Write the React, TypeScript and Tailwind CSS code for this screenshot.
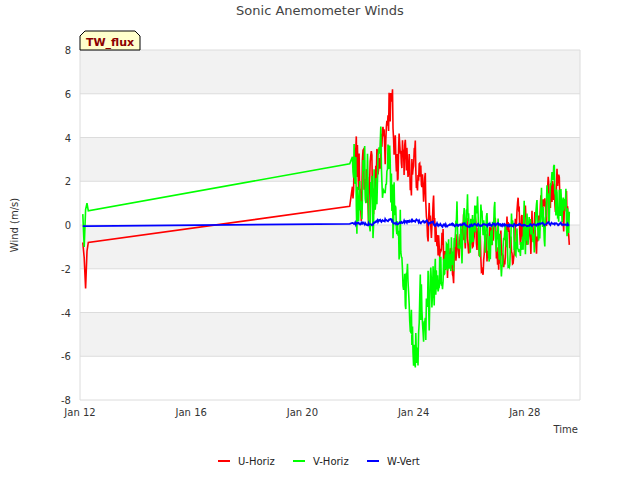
import React from "react";

const X0 = 80, X1 = 580, Y0 = 50, Y1 = 400;
const xd = (d: number) => 80 + (d - 12) * 27.8;
const yv = (v: number) => Y0 + ((8 - v) / 16) * (Y1 - Y0);

function rng(seed: number) {
  let s = seed;
  return () => {
    s = (s * 1103515245 + 12345) % 2147483648;
    return s / 2147483648;
  };
}
function interp(pts: number[][], t: number) {
  for (let i = 0; i < pts.length - 1; i++) {
    if (t >= pts[i][0] && t <= pts[i + 1][0]) {
      const f = (t - pts[i][0]) / (pts[i + 1][0] - pts[i][0]);
      return pts[i][1] + f * (pts[i + 1][1] - pts[i][1]);
    }
  }
  return pts[pts.length - 1][1];
}
function series(start: number[][], mean: number[][], amp: number[][], seed: number, clampMin: number, clampMax: number) {
  const r = rng(seed);
  const out: number[][] = [...start];
  let prev = 0;
  for (let t = 21.8; t <= 29.6; t += 0.02) {
    const n = (r() - 0.5) * 2;
    prev = prev * 0.55 + n;
    let v = interp(mean, t) + prev * interp(amp, t);
    v = Math.max(clampMin, Math.min(clampMax, v));
    out.push([t, v]);
  }
  return out;
}
const U = series(
  [[12.1, -0.8], [12.15, -1.5], [12.2, -2.9], [12.25, -1.2], [12.3, -0.8], [21.7, 0.85]],
  [[21.8, 1.5], [22, 2.5], [22.5, 1.5], [23, 4.5], [23.15, 6.5], [23.3, 3.5], [23.6, 3.5], [24, 2.5], [24.3, 1.3], [24.6, 0.5], [25, -1.2], [25.3, -2], [25.6, -0.5], [26, 0.3], [26.5, -1.3], [27, -1.2], [27.5, -0.5], [28, 0], [28.5, -0.3], [29, 1.3], [29.2, 2.3], [29.6, -0.5]],
  [[21.8, 1.3], [23, 1.5], [24, 1.1], [25, 1], [26, 0.9], [29.6, 0.9]],
  7, -2.9, 7.1
);
const V = series(
  [[12.1, 0.5], [12.15, -1.0], [12.2, 0.7], [12.25, 1.0], [12.3, 0.65], [21.7, 2.8]],
  [[21.8, 2.5], [22, 1], [22.3, 2], [22.6, 1.5], [23, 3.5], [23.2, 1], [23.5, -1], [23.8, -3], [24, -5], [24.3, -3.5], [24.7, -3], [25, -2.5], [25.3, -1.5], [25.6, -0.5], [26, 0], [26.5, -0.3], [27, -0.5], [28, 0], [28.5, 0.2], [29, 0.8], [29.3, 1], [29.6, 0]],
  [[21.8, 1.7], [23, 2.0], [24, 1.7], [25, 1.4], [26, 1.1], [29.6, 1.2]],
  13, -6.6, 4.5
);
const W = series(
  [[12.1, -0.05], [12.3, -0.05], [21.7, 0.05]],
  [[21.8, 0.05], [22.5, 0.05], [23, 0.25], [23.5, 0.1], [24, 0.2], [24.5, 0.1], [25, 0], [26, 0], [29.6, 0.05]],
  [[21.8, 0.07], [29.6, 0.05]],
  21, -0.3, 0.35
);
const path = (s: number[][]) => s.map((p, i) => `${i ? "L" : "M"}${xd(p[0]).toFixed(1)},${yv(p[1]).toFixed(1)}`).join("");

export default function App() {
  const ticks = [8, 6, 4, 2, 0, -2, -4, -6, -8];
  const xt = [[12, "Jan 12"], [16, "Jan 16"], [20, "Jan 20"], [24, "Jan 24"], [28, "Jan 28"]] as const;
  return (
    <div className="w-[640px] h-[480px] bg-white relative" style={{ fontFamily: '"DejaVu Sans", sans-serif' }}>
      <svg width="640" height="480" className="absolute inset-0">
        <text x="320" y="15" textAnchor="middle" fontSize="13" fill="#444">Sonic Anemometer Winds</text>
        {[0, 2, 4, 6].map((i) => (
          <rect key={i} x={X0} y={yv(8 - i * 2)} width={X1 - X0} height={43.75} fill="#f2f2f2" />
        ))}
        {ticks.map((t) => (
          <g key={t}>
            <line x1={X0} x2={X1} y1={yv(t)} y2={yv(t)} stroke="#dcdcdc" />
            <text x="71" y={yv(t) + 4} textAnchor="end" fontSize="10" fill="#333">{t}</text>
          </g>
        ))}
        <line x1={X0} x2={X0} y1={Y0} y2={Y1} stroke="#dcdcdc" />
        <line x1={X1} x2={X1} y1={Y0} y2={Y1} stroke="#dcdcdc" />
        {xt.map(([d, l]) => (
          <text key={l} x={xd(d)} y="416" textAnchor="middle" fontSize="10" fill="#333">{l}</text>
        ))}
        <text x="578" y="433" textAnchor="end" fontSize="10" fill="#333">Time</text>
        <text x="18" y="225" textAnchor="middle" fontSize="10" fill="#333" transform="rotate(-90 18 225)">Wind (m/s)</text>
        <path d={path(U)} fill="none" stroke="#ff0000" strokeWidth="1.6" />
        <path d={path(V)} fill="none" stroke="#00ff00" strokeWidth="1.6" />
        <path d={path(W)} fill="none" stroke="#0000ff" strokeWidth="1.8" />
        <path d="M80,50 L80,36 L85,31 L135,31 L140,36 L140,50 Z" fill="#ffffcc" stroke="#000" strokeWidth="1" />
        <text x="110" y="46" textAnchor="middle" fontSize="11" fontWeight="bold" fill="#8b0000">TW_flux</text>
        <line x1="218" x2="230" y1="461" y2="461" stroke="#ff0000" strokeWidth="2" />
        <text x="238" y="465" fontSize="10" fill="#222">U-Horiz</text>
        <line x1="293" x2="305" y1="461" y2="461" stroke="#00ff00" strokeWidth="2" />
        <text x="313" y="465" fontSize="10" fill="#222">V-Horiz</text>
        <line x1="367" x2="379" y1="461" y2="461" stroke="#0000ff" strokeWidth="2" />
        <text x="387" y="465" fontSize="10" fill="#222">W-Vert</text>
      </svg>
    </div>
  );
}
